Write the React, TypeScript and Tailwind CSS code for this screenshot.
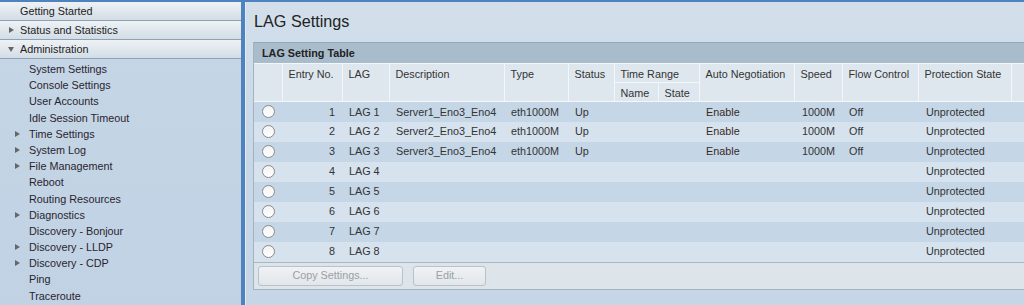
import { ReactNode } from 'react';

const sideTop = [
  { label: 'Getting Started', arrow: 'none' },
  { label: 'Status and Statistics', arrow: 'right' },
  { label: 'Administration', arrow: 'down' },
];

const sideItems = [
  { label: 'System Settings', arrow: false },
  { label: 'Console Settings', arrow: false },
  { label: 'User Accounts', arrow: false },
  { label: 'Idle Session Timeout', arrow: false },
  { label: 'Time Settings', arrow: true },
  { label: 'System Log', arrow: true },
  { label: 'File Management', arrow: true },
  { label: 'Reboot', arrow: false },
  { label: 'Routing Resources', arrow: false },
  { label: 'Diagnostics', arrow: true },
  { label: 'Discovery - Bonjour', arrow: false },
  { label: 'Discovery - LLDP', arrow: true },
  { label: 'Discovery - CDP', arrow: true },
  { label: 'Ping', arrow: false },
  { label: 'Traceroute', arrow: false },
];

const lags = [1, 2, 3, 4, 5, 6, 7, 8].map((n) => ({
  entry: n,
  lag: `LAG ${n}`,
  description: n <= 3 ? `Server${n}_Eno3_Eno4` : '',
  type: n <= 3 ? 'eth1000M' : '',
  status: n <= 3 ? 'Up' : '',
  auto: n <= 3 ? 'Enable' : '',
  speed: n <= 3 ? '1000M' : '',
  flow: n <= 3 ? 'Off' : '',
  protection: 'Unprotected',
}));

const colWidths = [28, 60, 47, 115, 64, 46, 44, 41, 95, 48, 76, 93, 60];

const RightArrow = () => (
  <span className="inline-block w-0 h-0 border-y-[3.5px] border-y-transparent border-l-[5px] border-l-[#666]" />
);

const DownArrow = () => (
  <span className="inline-block w-0 h-0 border-x-[3.5px] border-x-transparent border-t-[5px] border-t-[#666]" />
);

const Th = ({ children, className = '', rowSpan, colSpan }: { children?: ReactNode; className?: string; rowSpan?: number; colSpan?: number }) => (
  <th
    rowSpan={rowSpan}
    colSpan={colSpan}
    className={`border border-[#f4f7fa] px-[6px] pt-[4px] leading-[12px] text-left align-top font-normal whitespace-nowrap overflow-hidden ${className}`}
  >
    {children}
  </th>
);

const Radio = () => (
  <span className="block w-[13px] h-[13px] rounded-full border border-[#8a8a8a] bg-gradient-to-b from-[#f2f2f2] to-white" />
);

export default function App() {
  return (
    <div
      className="w-[1024px] h-[305px] overflow-hidden flex bg-[#4f83c0] text-[10.8px] text-[#333]"
      style={{ fontFamily: '"Liberation Sans", Arial, sans-serif' }}
    >
      {/* sidebar */}
      <div className="w-[241px] shrink-0 mt-[2px] bg-gradient-to-b from-[#c6d6e6] to-[#c0d2e4]">
        {sideTop.map((item) => (
          <div
            key={item.label}
            className="h-[19px] flex items-center border-b border-[#8ea2b4] bg-gradient-to-b from-[#eef2f5] to-[#d3dde6] text-[#222]"
          >
            <span className="w-[20px] flex justify-center pl-[2px]">
              {item.arrow === 'right' && <RightArrow />}
              {item.arrow === 'down' && <DownArrow />}
            </span>
            <span>{item.label}</span>
          </div>
        ))}
        <div className="pt-[2px]">
          {sideItems.map((item) => (
            <div key={item.label} className="h-[16.2px] flex items-center text-[#2a1f2f]">
              <span className="w-[29px] flex justify-center pl-[6px]">
                {item.arrow && <RightArrow />}
              </span>
              <span>{item.label}</span>
            </div>
          ))}
        </div>
      </div>

      {/* main */}
      <div className="flex-1 ml-[4px] mt-[2px] border-l border-[#e2eaf2] bg-gradient-to-b from-[#d2dfeb] via-[#c9d8e7] to-[#c6d6e6] pl-[7px] min-w-0">
        <h1 className="text-[16.2px] leading-[20px] text-[#222] pt-[9px] pl-[1px] h-[40px]">LAG Settings</h1>

        <div className="w-[820px] border-l border-b border-[#a4b2be]">
          <div className="h-[21px] flex items-center pl-[8px] bg-[#a9bccc] border-t border-[#95a8b8] font-bold text-[#222]">
            LAG Setting Table
          </div>
          <table className="table-fixed border-collapse w-[817px]">
            <colgroup>
              {colWidths.map((w, i) => (
                <col key={i} style={{ width: w }} />
              ))}
            </colgroup>
            <thead>
              <tr className="bg-[#dfe7ee] h-[19px]">
                <Th rowSpan={2} className="border-l-0" />
                <Th rowSpan={2}>Entry No.</Th>
                <Th rowSpan={2}>LAG</Th>
                <Th rowSpan={2}>Description</Th>
                <Th rowSpan={2}>Type</Th>
                <Th rowSpan={2}>Status</Th>
                <Th colSpan={2}>Time Range</Th>
                <Th rowSpan={2}>Auto Negotiation</Th>
                <Th rowSpan={2}>Speed</Th>
                <Th rowSpan={2}>Flow Control</Th>
                <Th rowSpan={2}>Protection State</Th>
                <Th rowSpan={2} />
              </tr>
              <tr className="bg-[#dfe7ee] h-[19px]">
                <Th>Name</Th>
                <Th>State</Th>
              </tr>
            </thead>
            <tbody>
              {lags.map((row, i) => (
                <tr key={row.entry} className={`h-[20px] ${i % 2 === 0 ? 'bg-[#c5d6e6]' : 'bg-[#d6e2ed]'}`}>
                  <td className="pl-[8px]"><Radio /></td>
                  <td className="text-right pr-[7px]">{row.entry}</td>
                  <td className="pl-[7px] whitespace-nowrap">{row.lag}</td>
                  <td className="pl-[7px] whitespace-nowrap">{row.description}</td>
                  <td className="pl-[7px] whitespace-nowrap">{row.type}</td>
                  <td className="pl-[7px]">{row.status}</td>
                  <td />
                  <td />
                  <td className="pl-[7px] text-[#3a2a24]">{row.auto}</td>
                  <td className="pl-[8px]">{row.speed}</td>
                  <td className="pl-[7px]">{row.flow}</td>
                  <td className="pl-[8px]">{row.protection}</td>
                  <td />
                </tr>
              ))}
            </tbody>
          </table>
          <div className="h-[27px] flex items-center gap-[10px] pl-[4px] bg-[#dde4ea] border-t border-[#a9b7c3]">
            <button className="w-[145px] h-[20px] rounded-[3px] border border-[#b9c2ca] bg-gradient-to-b from-[#f0f2f4] to-[#e2e6ea] text-[#9aa0a6]">
              Copy Settings...
            </button>
            <button className="w-[73px] h-[20px] rounded-[3px] border border-[#b9c2ca] bg-gradient-to-b from-[#f0f2f4] to-[#e2e6ea] text-[#9aa0a6]">
              Edit...
            </button>
          </div>
        </div>
      </div>
    </div>
  );
}
